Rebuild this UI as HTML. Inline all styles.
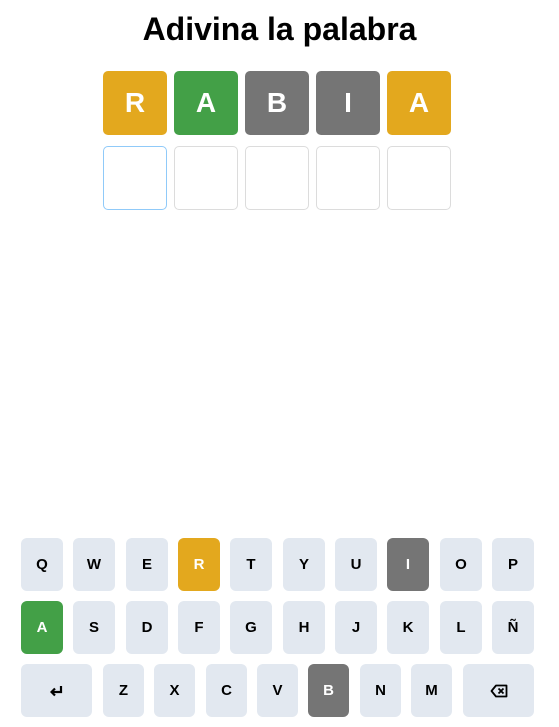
<!DOCTYPE html>
<html><head><meta charset="utf-8"><style>
*{margin:0;padding:0;box-sizing:border-box}
body{width:559px;height:727px;background:#fff;font-family:"Liberation Sans",Arial,sans-serif;position:relative;overflow:hidden}
h1{position:absolute;top:11px;left:0;width:559px;text-align:center;font-size:32px;font-weight:bold;color:#000}
.t{position:absolute;width:64px;height:64px;border-radius:5px;display:flex;align-items:center;justify-content:center;font-size:28px;font-weight:bold;color:#fff}
.e{border:1px solid #dcdcdc;background:#fff}
.k{position:absolute;height:53px;border-radius:6px;background:#e2e8f0;display:flex;align-items:center;justify-content:center;font-size:15px;font-weight:bold;color:#000}
.y{background:#e3a81e;color:#fff}.g{background:#43a047;color:#fff}.d{background:#757575;color:#fff}
</style></head><body>
<h1>Adivina la palabra</h1>
<div class="t y" style="left:103px;top:71px">R</div>
<div class="t g" style="left:174px;top:71px">A</div>
<div class="t d" style="left:245px;top:71px">B</div>
<div class="t d" style="left:316px;top:71px">I</div>
<div class="t y" style="left:387px;top:71px">A</div>
<div class="t e" style="left:103px;top:146px;border-color:#90caf9"></div>
<div class="t e" style="left:174px;top:146px"></div>
<div class="t e" style="left:245px;top:146px"></div>
<div class="t e" style="left:316px;top:146px"></div>
<div class="t e" style="left:387px;top:146px"></div>

<div class="k" style="left:21px;top:538px;width:42px">Q</div>
<div class="k" style="left:73px;top:538px;width:42px">W</div>
<div class="k" style="left:126px;top:538px;width:42px">E</div>
<div class="k y" style="left:178px;top:538px;width:42px">R</div>
<div class="k" style="left:230px;top:538px;width:42px">T</div>
<div class="k" style="left:283px;top:538px;width:42px">Y</div>
<div class="k" style="left:335px;top:538px;width:42px">U</div>
<div class="k d" style="left:387px;top:538px;width:42px">I</div>
<div class="k" style="left:440px;top:538px;width:42px">O</div>
<div class="k" style="left:492px;top:538px;width:42px">P</div>

<div class="k g" style="left:21px;top:601px;width:42px">A</div>
<div class="k" style="left:73px;top:601px;width:42px">S</div>
<div class="k" style="left:126px;top:601px;width:42px">D</div>
<div class="k" style="left:178px;top:601px;width:42px">F</div>
<div class="k" style="left:230px;top:601px;width:42px">G</div>
<div class="k" style="left:283px;top:601px;width:42px">H</div>
<div class="k" style="left:335px;top:601px;width:42px">J</div>
<div class="k" style="left:387px;top:601px;width:42px">K</div>
<div class="k" style="left:440px;top:601px;width:42px">L</div>
<div class="k" style="left:492px;top:601px;width:42px">Ñ</div>

<div class="k" style="left:21px;top:664px;width:71px"><svg width="14" height="12" viewBox="0 0 14 12"><path d="M11 1v6H3" fill="none" stroke="#000" stroke-width="2.2"/><path d="M5 3.5L1.5 7 5 10.5" fill="none" stroke="#000" stroke-width="2.2"/></svg></div>
<div class="k" style="left:103px;top:664px;width:41px">Z</div>
<div class="k" style="left:154px;top:664px;width:41px">X</div>
<div class="k" style="left:206px;top:664px;width:41px">C</div>
<div class="k" style="left:257px;top:664px;width:41px">V</div>
<div class="k d" style="left:308px;top:664px;width:41px">B</div>
<div class="k" style="left:360px;top:664px;width:41px">N</div>
<div class="k" style="left:411px;top:664px;width:41px">M</div>
<div class="k" style="left:463px;top:664px;width:71px"><svg width="18" height="14" viewBox="0 0 18 14"><path d="M6 1.5h10.5v11H6L1.5 7z" fill="none" stroke="#000" stroke-width="1.8" stroke-linejoin="round"/><path d="M8.5 4.5l5 5M13.5 4.5l-5 5" stroke="#000" stroke-width="1.8"/></svg></div>
</body></html>
